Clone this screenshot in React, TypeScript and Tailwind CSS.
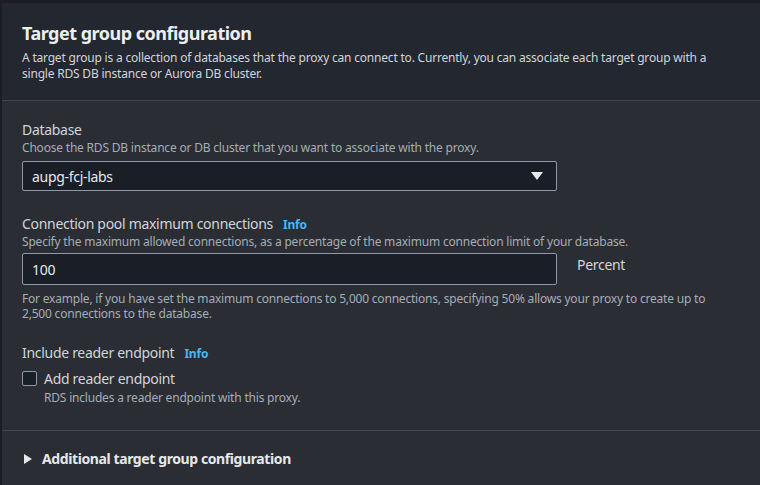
import React from "react";

export default function App() {
  return (
    <div
      className="w-[760px] h-[485px] overflow-hidden bg-[#1b1d22] pt-[3px] pl-[2px]"
      style={{ fontFamily: '"Noto Sans", "Open Sans", sans-serif' }}
    >
      <div className="h-full bg-[#2a2d33]">
        <div className="bg-[#232730] px-5 pt-[19px] pb-[18px] border-b border-[#414750]">
          <h2 className="text-[18px] leading-[22px] font-bold tracking-[-0.5px] text-[#eceef0]">Target group configuration</h2>
          <p className="mt-[6px] text-[12px] leading-[16px] tracking-[-0.2px] text-[#d1d5db]">
            A target group is a collection of databases that the proxy can connect to. Currently, you can associate each target group with a single RDS DB instance or Aurora DB cluster.
          </p>
        </div>
        <div className="px-5 pt-[19px] pb-[24px] border-b border-[#414750]">
          <div className="text-[14px] leading-[20px] tracking-[-0.3px] text-[#d1d5db]">Database</div>
          <div className="text-[12px] leading-[16px] tracking-[-0.2px] text-[#a4adb8]">Choose the RDS DB instance or DB cluster that you want to associate with the proxy.</div>
          <div className="mt-[5px] w-[535px] h-[30px] flex items-center justify-between px-[9px] bg-[#1a1f27] border border-[#8d99a8] rounded-[2px]">
            <span className="text-[14px] tracking-[-0.3px] text-[#e6e8ea]">aupg-fcj-labs</span>
            <svg width="12" height="10" viewBox="0 0 12 10" className="mr-[4px]">
              <polygon points="0,1 12,1 6,9" fill="#e6e8ea" />
            </svg>
          </div>

          <div className="mt-[23px] flex items-baseline gap-[10px]">
            <span className="text-[14px] leading-[20px] tracking-[-0.3px] text-[#d1d5db]">Connection pool maximum connections</span>
            <span className="text-[12px] font-bold tracking-[-0.2px] text-[#44b9f6]">Info</span>
          </div>
          <div className="text-[12px] leading-[16px] tracking-[-0.2px] text-[#a4adb8]">Specify the maximum allowed connections, as a percentage of the maximum connection limit of your database.</div>
          <div className="mt-[3px] flex items-start gap-[20px]">
            <div className="w-[535px] h-[32px] flex items-center px-[9px] bg-[#1a1f27] border border-[#8d99a8] rounded-[2px]">
              <span className="text-[14px] tracking-[-0.3px] text-[#e6e8ea]">100</span>
            </div>
            <span className="text-[14px] leading-[20px] pt-[2px] tracking-[-0.3px] text-[#d1d5db]">Percent</span>
          </div>
          <div className="mt-[6px] text-[12px] leading-[15px] tracking-[-0.2px] text-[#a4adb8] w-[700px]">
            For example, if you have set the maximum connections to 5,000 connections, specifying 50% allows your proxy to create up to 2,500 connections to the database.
          </div>

          <div className="mt-[22px] flex items-baseline gap-[10px]">
            <span className="text-[14px] leading-[20px] tracking-[-0.3px] text-[#d1d5db]">Include reader endpoint</span>
            <span className="text-[12px] font-bold tracking-[-0.2px] text-[#44b9f6]">Info</span>
          </div>
          <div className="mt-[6px] flex items-start gap-[7px]">
            <div className="mt-[2px] w-[15px] h-[15px] rounded-[2px] border border-[#8d99a8] bg-[#1a1f27]" />
            <div>
              <div className="text-[14px] leading-[20px] tracking-[-0.3px] text-[#d1d5db]">Add reader endpoint</div>
              <div className="mt-[1px] text-[12px] leading-[16px] tracking-[-0.2px] text-[#a4adb8]">RDS includes a reader endpoint with this proxy.</div>
            </div>
          </div>
        </div>
        <div className="px-5 pt-[18px] flex items-center gap-[10px]">
          <svg width="8" height="10" viewBox="0 0 8 10" className="ml-[2px]">
            <polygon points="0,0 8,5 0,10" fill="#e6e8ea" />
          </svg>
          <span className="text-[14px] leading-[20px] font-bold tracking-[-0.4px] text-[#e6e8ea]">Additional target group configuration</span>
        </div>
      </div>
    </div>
  );
}
